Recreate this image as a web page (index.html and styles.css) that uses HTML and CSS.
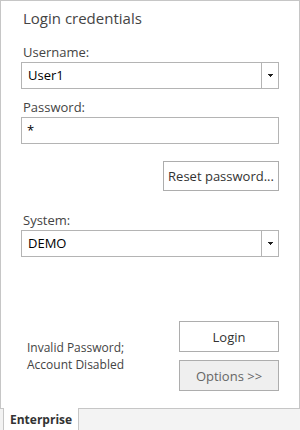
FILE: index.html
```html
<!DOCTYPE html>
<html lang="en">
<head>
    <meta charset="UTF-8">
    <title>Login</title>
    <link rel="stylesheet" href="styles.css">
</head>
<body>
    <div class="login-panel">
        <div class="panel-title">Login credentials</div>

        <div class="field-label first">Username:</div>
        <div class="combo">
            <div class="combo-text">User1</div>
            <div class="combo-btn">
                <svg class="arrow" width="5" height="3" viewBox="0 0 5 3"><path d="M0 0h5v1H0z M1 1h3v1H1z M2 2h1v1H2z" fill="#1e1e1e"/></svg>
            </div>
        </div>

        <div class="field-label">Password:</div>
        <div class="text-box">*</div>

        <div class="reset-row">
            <button class="btn reset-btn">Reset password...</button>
        </div>

        <div class="field-label system">System:</div>
        <div class="combo">
            <div class="combo-text">DEMO</div>
            <div class="combo-btn">
                <svg class="arrow" width="5" height="3" viewBox="0 0 5 3"><path d="M0 0h5v1H0z M1 1h3v1H1z M2 2h1v1H2z" fill="#1e1e1e"/></svg>
            </div>
        </div>

        <div class="bottom-row">
            <div class="status-text">Invalid Password;<br>Account Disabled</div>
            <div class="action-buttons">
                <button class="btn login-btn">Login</button>
                <button class="btn options-btn">Options &gt;&gt;</button>
            </div>
        </div>
    </div>

    <div class="tab-strip">
        <div class="tab active">Enterprise</div>
    </div>
</body>
</html>
```

FILE: styles.css
```css
body {
    margin: 0;
    width: 300px;
    height: 430px;
    background-color: #f3f3f3;
    font-family: 'Open Sans', 'Noto Sans', Arial, sans-serif;
    color: #444;
    overflow: hidden;
}

.login-panel {
    box-sizing: border-box;
    width: 300px;
    height: 409px;
    background: #fff;
    border: 1px solid #c6c6c6;
    padding: 7px 20px 0 20px;
    display: flex;
    flex-direction: column;
}

.panel-title {
    font-size: 15px;
    line-height: 20px;
    padding-left: 2px;
    color: #444;
}

.field-label {
    font-size: 13px;
    line-height: 18px;
    padding-left: 2px;
    margin-top: 9px;
    margin-bottom: 1px;
}

.field-label.first {
    margin-top: 15px;
}

.field-label.system {
    margin-top: 20px;
}

.combo {
    box-sizing: border-box;
    height: 27px;
    border: 1px solid #b4b4b4;
    display: flex;
    align-items: stretch;
}

.combo-text {
    flex: 1;
    padding-left: 6px;
    font-size: 13px;
    line-height: 25px;
    color: #000;
}

.combo-btn {
    width: 16px;
    border-left: 1px solid #b4b4b4;
    display: flex;
    align-items: center;
    justify-content: center;
}

.arrow {
    display: block;
}

.text-box {
    box-sizing: border-box;
    height: 27px;
    border: 1px solid #b4b4b4;
    padding-left: 5px;
    font-size: 13px;
    line-height: 25px;
    color: #000;
}

.reset-row {
    display: flex;
    justify-content: flex-end;
    margin-top: 17px;
}

.btn {
    box-sizing: border-box;
    background: #fff;
    border: 1px solid #adadad;
    font-family: inherit;
    font-size: 13px;
    color: #333;
    padding: 0;
    margin: 0;
}

.reset-btn {
    width: 116px;
    height: 30px;
}

.bottom-row {
    margin-top: 64px;
    display: flex;
    justify-content: space-between;
    align-items: center;
}

.status-text {
    padding-left: 6px;
    font-size: 12px;
    line-height: 17px;
    color: #444;
}

.action-buttons {
    display: flex;
    flex-direction: column;
    gap: 8px;
}

.login-btn {
    width: 100px;
    height: 31px;
}

.options-btn {
    width: 100px;
    height: 31px;
    background: #efefef;
    color: #666;
}

.tab-strip {
    display: flex;
    padding-left: 3px;
    margin-top: -1px;
}

.tab {
    background: #fff;
    border-left: 1px solid #c6c6c6;
    border-right: 1px solid #c6c6c6;
    padding: 2px 6px 0 6px;
    height: 21px;
    font-size: 12px;
    font-weight: bold;
    color: #333;
    line-height: 20px;
}
```
